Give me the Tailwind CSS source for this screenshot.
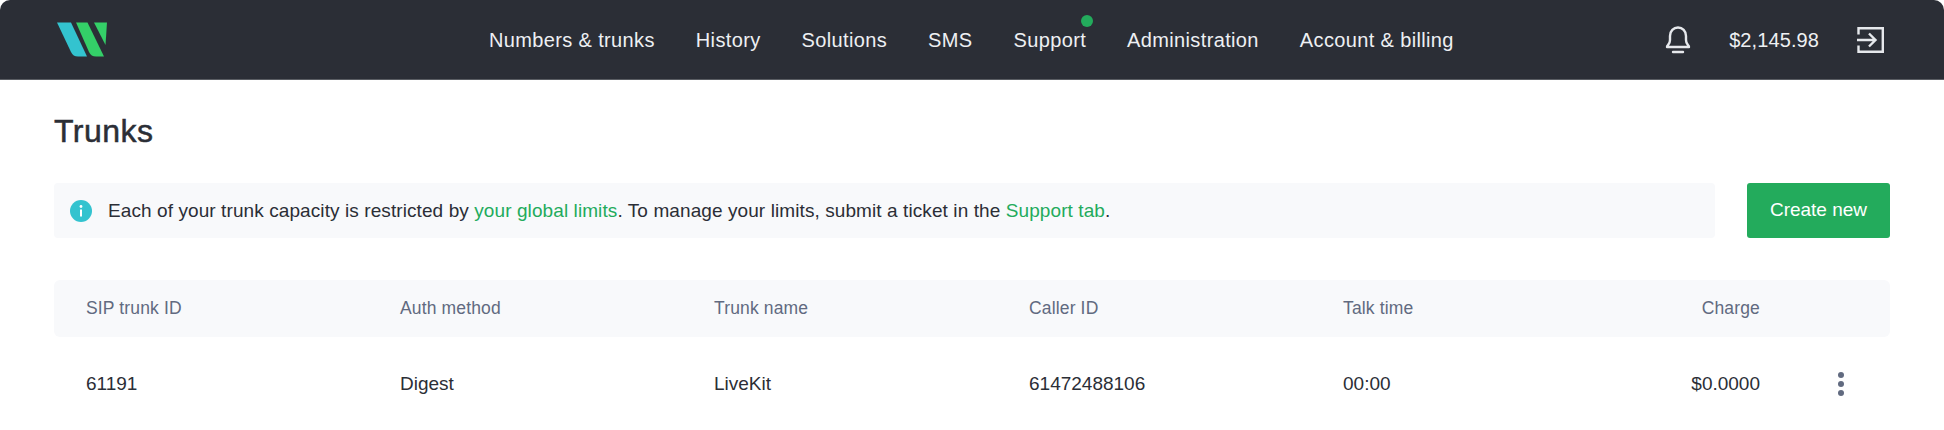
<!DOCTYPE html>
<html lang="en">
<head>
<meta charset="utf-8">
<script src="https://cdn.jsdelivr.net/npm/@tailwindcss/browser@4"></script>
<title>Trunks</title>
</head>
<body class="bg-white font-['Liberation_Sans',sans-serif] text-[#2b2e36] overflow-hidden">
<header class="relative h-[80px] bg-[#2b2e36] border-b border-[#5a5d63] rounded-t-[10px] flex items-center text-[#eef0f3]">
  <svg class="ml-[57px] w-[50px] h-[35px] shrink-0" viewBox="0 0 50 35">
    <path d="M0 0.500H14L30 34.500H21C17.500 34.500 15.500 33 14 30Z" fill="#33c3cf"/>
    <path d="M19 0.500H30.500L47 34.500H39C35.500 34.500 33.500 33 32 30Z" fill="#34cf68"/>
    <path d="M37 0.500H50L48.500 23Z" fill="#34cf68"/>
  </svg>
  <nav class="absolute left-[489px] top-0 h-[79px] flex items-center gap-[41px] text-[20px] leading-none tracking-[0.36px]">
    <a>Numbers &amp; trunks</a>
    <a>History</a>
    <a>Solutions</a>
    <a>SMS</a>
    <a class="relative">Support<span class="absolute right-[-7px] top-[-15px] w-[12px] h-[12px] rounded-full bg-[#23ab5c]"></span></a>
    <a>Administration</a>
    <a>Account &amp; billing</a>
  </nav>
  <div class="ml-auto mr-[60px] flex items-center">
    <svg class="w-[26px] h-[28px]" viewBox="0 0 26 28" fill="none" stroke="#e6e8ec" stroke-width="2.400" stroke-linejoin="round" stroke-linecap="round">
      <path d="M2 21C2 19 5 19 5 14V10C5 5 8.500 1.500 13 1.500C17.500 1.500 21 5 21 10V14C21 19 24 19 24 21Z"/>
      <path d="M8 26H18"/>
    </svg>
    <span class="ml-[38px] text-[20px] leading-none tracking-[0.1px]">$2,145.98</span>
    <svg class="ml-[38px] w-[27px] h-[26px]" viewBox="0 0 27 26" fill="none" stroke="#e6e8ec" stroke-width="2.400">
      <path d="M1.500 7.500V1.200H25.800V24.800H1.500V18.500"/>
      <path d="M0 13H18M12 6.500L18.500 13L12 19.500"/>
    </svg>
  </div>
</header>
<main class="px-[54px]">
  <h1 class="mt-[32px] text-[32px] leading-[38px] tracking-[0.5px] [-webkit-text-stroke:0.5px_#2b2e36]">Trunks</h1>
  <div class="mt-[33px] flex gap-[32px]">
    <div class="flex-1 h-[55px] bg-[#f8f9fb] rounded-[4px] flex items-center pl-[16px] text-[19px] tracking-[0.09px]">
      <svg class="w-[22px] h-[22px] shrink-0" viewBox="0 0 22 22">
        <circle cx="11" cy="11" r="11" fill="#33c3cf"/>
        <circle cx="11" cy="6.500" r="1.400" fill="#fff"/>
        <rect x="10" y="9.500" width="2" height="7" fill="#fff"/>
      </svg>
      <p class="ml-[16px] pt-[1px]">Each of your trunk capacity is restricted by <a class="text-[#23ab5c]">your global limits</a>. To manage your limits, submit a ticket in the <a class="text-[#23ab5c]">Support tab</a>.</p>
    </div>
    <button class="w-[143px] h-[55px] bg-[#23ab5c] rounded-[3px] text-white text-[19px]">Create new</button>
  </div>
  <div class="mt-[42px] h-[57px] bg-[#f8f9fb] rounded-[6px] grid grid-cols-[314px_314px_315px_314px_314px_1fr] items-center pl-[32px] pr-[130px] text-[17.500px] tracking-[0.15px] text-[#616a80]">
    <div>SIP trunk ID</div>
    <div>Auth method</div>
    <div>Trunk name</div>
    <div>Caller ID</div>
    <div>Talk time</div>
    <div class="text-right">Charge</div>
  </div>
  <div class="h-[94px] grid grid-cols-[314px_314px_315px_314px_314px_1fr] items-center pl-[32px] pr-[130px] text-[19px]">
    <div>61191</div>
    <div>Digest</div>
    <div>LiveKit</div>
    <div>61472488106</div>
    <div>00:00</div>
    <div class="relative text-right">$0.0000<span class="absolute right-[-84px] top-1/2 -translate-y-1/2 flex flex-col gap-[3px]"><i class="block w-[6px] h-[6px] rounded-full bg-[#616a80]"></i><i class="block w-[6px] h-[6px] rounded-full bg-[#616a80]"></i><i class="block w-[6px] h-[6px] rounded-full bg-[#616a80]"></i></span></div>
  </div>
</main>
</body>
</html>
